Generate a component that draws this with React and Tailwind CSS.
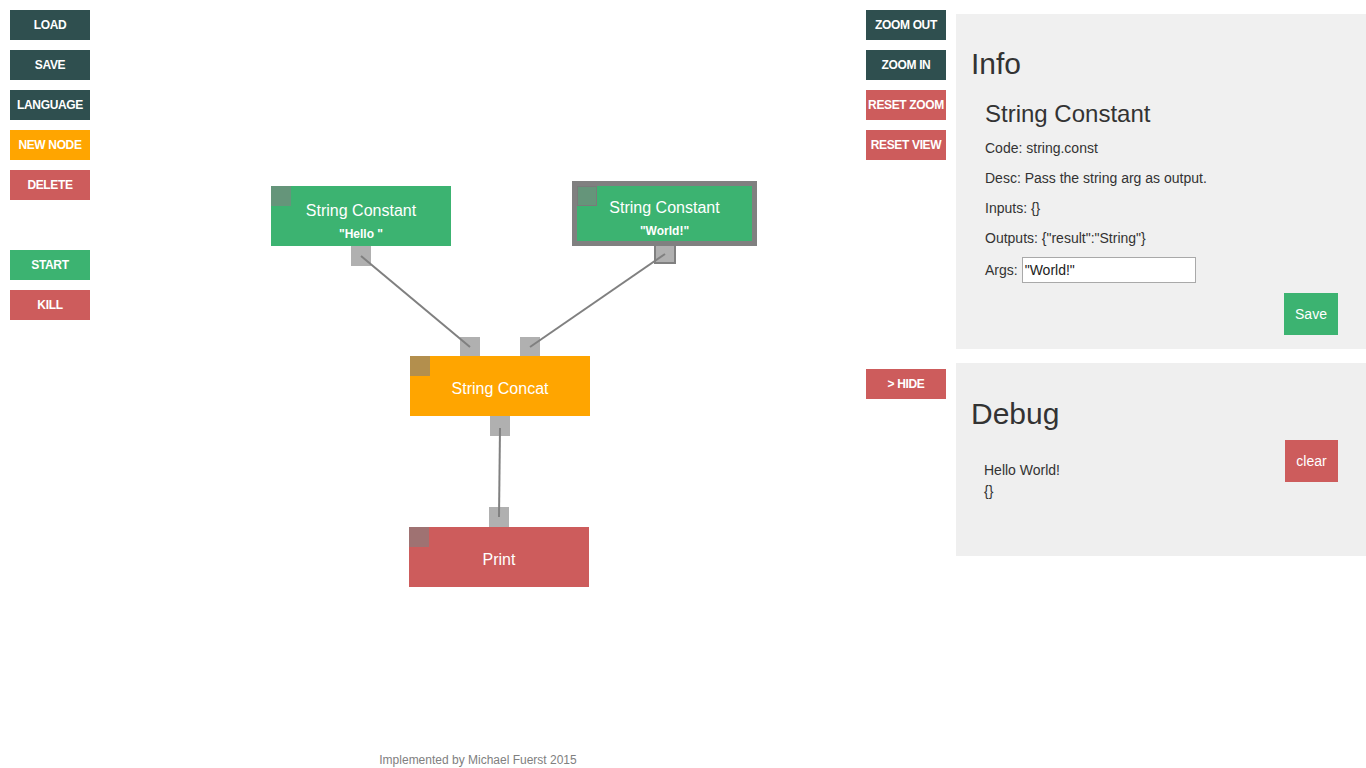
import React from "react";

const font = { fontFamily: '"Liberation Sans", Arial, sans-serif' };

function Btn({ color, children, className = "" }) {
  return (
    <div
      className={`w-[80px] h-[30px] flex items-center justify-center text-white font-bold text-[12px] tracking-[-0.35px] whitespace-nowrap ${color} ${className}`}
    >
      {children}
    </div>
  );
}

function Port({ left, top, selected }) {
  return (
    <div
      className={`absolute ${selected ? "w-[22px] h-[19px] border-2 border-[#808080] border-t-0" : "w-[20px] h-[20px]"} bg-[#b0b0b0]`}
      style={{ left, top }}
    />
  );
}

function Node({ left, top, color, title, sub, selected }) {
  return (
    <div
      className={`absolute ${selected ? "w-[185px] h-[65px] border-[5px] border-[#808080]" : "w-[180px] h-[60px]"} ${color}`}
      style={{ left, top }}
    >
      <div className={`absolute left-0 top-0 w-[20px] h-[20px] bg-[rgba(128,128,128,0.6)] ${selected ? "border border-[#7a7a7a]" : ""}`} />
      <div className="w-full h-full flex flex-col items-center justify-center text-white">
        <div className={`text-[16px] leading-[18px] ${sub ? (selected ? "mt-[9px]" : "mt-[10px]") : "mt-[6px]"}`}>{title}</div>
        {sub && <div className="text-[12px] font-bold leading-[14px] mt-[7px]">{sub}</div>}
      </div>
    </div>
  );
}

export default function App() {
  return (
    <div className="w-[1366px] h-[768px] bg-white flex overflow-hidden" style={font}>
      {/* left toolbar */}
      <div className="w-[100px] shrink-0 pl-[10px] pt-[10px] flex flex-col gap-[10px]">
        <Btn color="bg-[#2f4f4f]">LOAD</Btn>
        <Btn color="bg-[#2f4f4f]">SAVE</Btn>
        <Btn color="bg-[#2f4f4f]">LANGUAGE</Btn>
        <Btn color="bg-[#ffa500]">NEW NODE</Btn>
        <Btn color="bg-[#cd5c5c]">DELETE</Btn>
        <Btn color="bg-[#3cb371]" className="mt-[40px]">START</Btn>
        <Btn color="bg-[#cd5c5c]">KILL</Btn>
      </div>

      {/* canvas */}
      <div className="relative w-[756px] h-[768px] shrink-0">
        <Port left={251} top={246} />
        <Port left={554} top={245} selected />
        <Port left={360} top={337} />
        <Port left={420} top={337} />
        <Port left={390} top={416} />
        <Port left={389} top={507} />
        <svg className="absolute left-0 top-0 pointer-events-none" width="756" height="768">
          <line x1="261" y1="256" x2="370" y2="347" stroke="#808080" strokeWidth="2" />
          <line x1="565" y1="254" x2="430" y2="347" stroke="#808080" strokeWidth="2" />
          <line x1="400" y1="428" x2="399" y2="517" stroke="#808080" strokeWidth="2" />
        </svg>
        <Node left={171} top={186} color="bg-[#3cb371]" title="String Constant" sub={'"Hello "'} />
        <Node left={472} top={181} color="bg-[#3cb371]" title="String Constant" sub={'"World!"'} selected />
        <Node left={310} top={356} color="bg-[#ffa500]" title="String Concat" />
        <Node left={309} top={527} color="bg-[#cd5c5c]" title="Print" />
        <div className="absolute left-0 right-0 bottom-0 h-[16px] flex items-center justify-center text-[12px] text-[#808080]">
          Implemented by Michael Fuerst 2015
        </div>
      </div>

      {/* right toolbar */}
      <div className="w-[80px] ml-[10px] shrink-0 flex flex-col">
        <div className="pt-[10px] flex flex-col gap-[10px]">
          <Btn color="bg-[#2f4f4f]">ZOOM OUT</Btn>
          <Btn color="bg-[#2f4f4f]">ZOOM IN</Btn>
          <Btn color="bg-[#cd5c5c]">RESET ZOOM</Btn>
          <Btn color="bg-[#cd5c5c]">RESET VIEW</Btn>
        </div>
        <Btn color="bg-[#cd5c5c]" className="mt-[209px]">&gt; HIDE</Btn>
      </div>

      {/* panels */}
      <div className="w-[410px] ml-[10px] shrink-0 flex flex-col text-[#333333]">
        <div className="mt-[14px] h-[335px] bg-[#f0f0f0] pl-[15px] flex flex-col">
          <div className="mt-[33px] text-[30px] leading-[33px]">Info</div>
          <div className="ml-[14px] flex flex-col">
            <div className="mt-[21px] text-[24px] leading-[26px]">String Constant</div>
            <div className="mt-[11px] text-[14px] leading-[20px]">Code: string.const</div>
            <div className="mt-[10px] text-[14px] leading-[20px]">Desc: Pass the string arg as output.</div>
            <div className="mt-[10px] text-[14px] leading-[20px]">Inputs: {"{}"}</div>
            <div className="mt-[10px] text-[14px] leading-[20px]">Outputs: {'{"result":"String"}'}</div>
            <div className="mt-[9px] flex items-center text-[14px] leading-[20px]">
              <span>Args:</span>
              <div className="ml-[4px] w-[174px] h-[26px] bg-white border border-[#a9a9a9] flex items-center px-[2px] text-[14px] text-[#222]">
                "World!"
              </div>
            </div>
            <div className="flex justify-end mt-[10px] mr-[28px]">
              <div className="w-[54px] h-[42px] bg-[#3cb371] text-white text-[14px] flex items-center justify-center">Save</div>
            </div>
          </div>
        </div>
        <div className="mt-[14px] h-[193px] bg-[#efefef] pl-[15px] flex flex-col">
          <div className="mt-[34px] text-[30px] leading-[33px]">Debug</div>
          <div className="flex justify-between">
            <div className="ml-[13px] mt-[30px] text-[14px] leading-[21px]">
              <div>Hello World!</div>
              <div>{"{}"}</div>
            </div>
            <div className="mt-[10px] mr-[28px] w-[53px] h-[42px] bg-[#cd5c5c] text-white text-[14px] flex items-center justify-center">clear</div>
          </div>
        </div>
      </div>
    </div>
  );
}
